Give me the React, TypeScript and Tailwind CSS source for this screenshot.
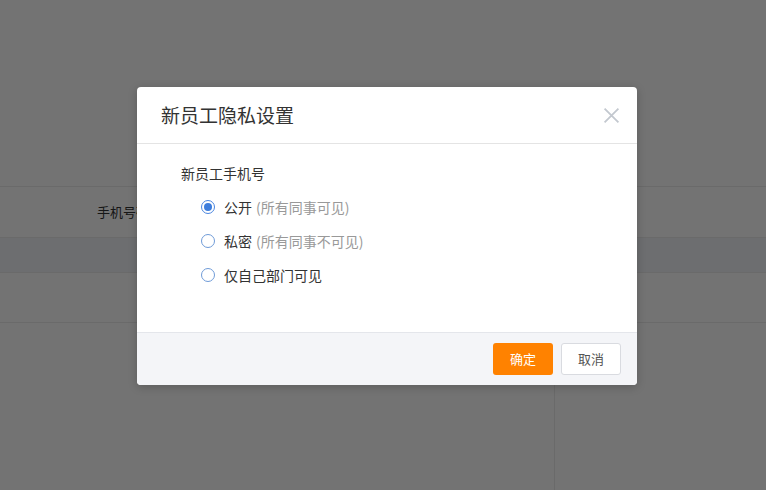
import React from "react";

const font = {
  fontFamily: '"Noto Sans CJK SC", "Noto Sans", sans-serif',
};

type Option = { id: string; label: string; hint?: string };

const options: Option[] = [
  { id: "public", label: "公开", hint: "(所有同事可见)" },
  { id: "private", label: "私密", hint: "(所有同事不可见)" },
  { id: "dept", label: "仅自己部门可见" },
];

const Radio: React.FC<{ checked: boolean }> = ({ checked }) => (
  <span
    className={`flex h-[14px] w-[14px] shrink-0 items-center justify-center rounded-full border ${
      checked ? "border-[#4a86e0]" : "border-[#6f9bd8]"
    } bg-white`}
  >
    {checked && <span className="h-[8px] w-[8px] rounded-full bg-[#3d7ddc]" />}
  </span>
);

const App: React.FC = () => {
  const selected = "public";

  return (
    <div className="relative h-[490px] w-[766px] overflow-hidden bg-white" style={font}>
      {/* page behind the mask */}
      <div className="h-[186px]" />
      <div className="flex h-[51px] items-center border-t border-[#ebebeb] pl-[97px] text-[13px] text-[#333]">
        手机号码
      </div>
      <div className="h-[35px] border-t border-[#ebebeb] bg-[#f1f3f9]" />
      <div className="h-[51px] border-y border-[#ebebeb]" />
      <div className="flex h-[200px]">
        <div className="w-[555px] border-r border-[#ebebeb]" />
      </div>

      {/* mask */}
      <div className="absolute inset-0 bg-black/55" />

      {/* dialog */}
      <div className="absolute left-[137px] top-[87px] flex h-[298px] w-[500px] flex-col overflow-hidden rounded-[4px] bg-white shadow-[0_2px_10px_rgba(0,0,0,0.2)]">
        <div className="flex h-[57px] shrink-0 items-center justify-between border-b border-[#e4e4e4] pl-[24px] pr-[17px]">
          <h2 className="text-[19px] font-normal text-[#333]">新员工隐私设置</h2>
          <button className="flex h-[18px] w-[18px] items-center justify-center text-[#c3c8cf]">
            <svg width="17" height="17" viewBox="0 0 16 16" fill="none">
              <path d="M1.5 1.5 14.5 14.5M14.5 1.5 1.5 14.5" stroke="currentColor" strokeWidth="1.7" />
            </svg>
          </button>
        </div>

        <div className="flex-1 pl-[44px] pt-[19px]">
          <div className="text-[14px] leading-[20px] text-[#333]">新员工手机号</div>
          <div className="mt-[7px] flex flex-col pl-[20px]">
            {options.map((o) => (
              <label key={o.id} className="flex h-[34px] items-center gap-[9px] text-[14px]">
                <Radio checked={o.id === selected} />
                <span className="text-[#333]">
                  {o.label}
                  {o.hint && <span className="ml-[4px] text-[#999]">{o.hint}</span>}
                </span>
              </label>
            ))}
          </div>
        </div>

        <div className="flex h-[53px] shrink-0 items-center justify-end gap-[8px] border-t border-[#e4e6eb] bg-[#f4f5f8] pr-[16px]">
          <button className="h-[32px] w-[60px] rounded-[3px] bg-[#ff8200] text-[13px] text-white">
            确定
          </button>
          <button className="h-[32px] w-[60px] rounded-[3px] border border-[#d9dbe0] bg-white text-[13px] text-[#555]">
            取消
          </button>
        </div>
      </div>
    </div>
  );
};

export default App;
